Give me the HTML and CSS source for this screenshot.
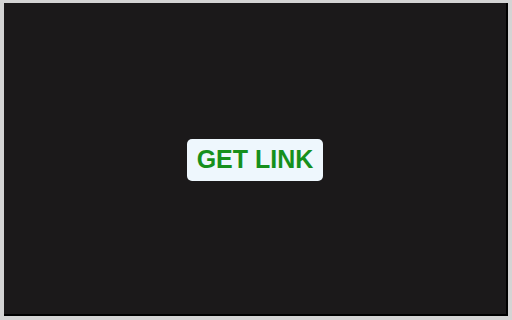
FILE: index.html
```html
<!DOCTYPE html>
<html lang="en">
<head>
    <meta charset="UTF-8">
    <title>Get Link</title>
    <link rel="stylesheet" href="styles.css">
</head>
<body>
    <div class="frame">
        <div class="panel">
            <button class="button">GET LINK</button>
        </div>
    </div>
</body>
</html>
```

FILE: styles.css
```css
html, body {
    margin: 0;
    padding: 0;
    height: 100%;
}
body {
    background-color: #d4d4d4;
    font-family: "Liberation Sans", Arial, sans-serif;
}
.frame {
    box-sizing: border-box;
    height: 320px;
    padding: 3px 4px 4px 4px;
}
.panel {
    box-sizing: border-box;
    height: 100%;
    background-color: #1b191a;
    border-right: 2px solid #000;
    border-bottom: 2px solid #000;
    display: flex;
    align-items: center;
    justify-content: center;
}
.button {
    background-color: #eef7fd;
    color: #16901c;
    font-family: "Liberation Sans", Arial, sans-serif;
    font-weight: bold;
    font-size: 25px;
    line-height: 29px;
    padding: 6px 10px 7px 10px;
    border: none;
    border-radius: 5px;
    margin-top: 3px;
    cursor: pointer;
}
```
